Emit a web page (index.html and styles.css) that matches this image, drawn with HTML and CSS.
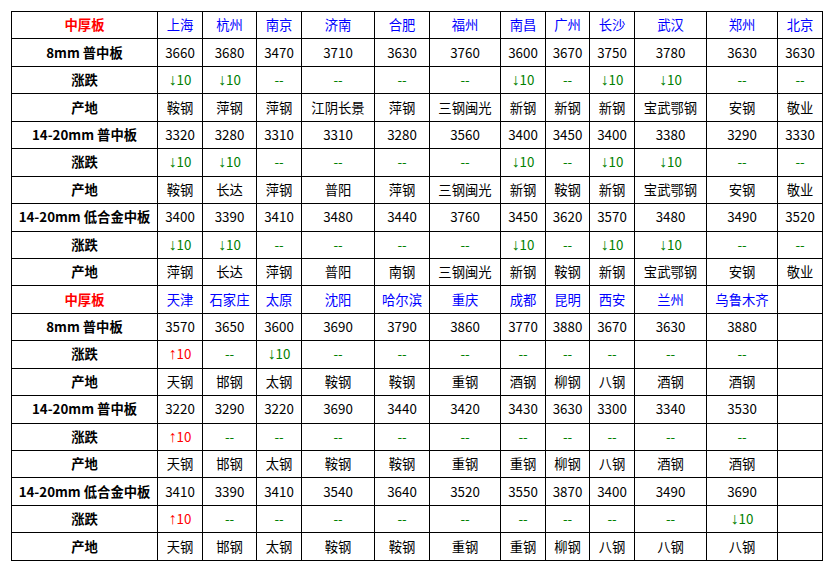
FILE: index.html
```html
<!DOCTYPE html>
<html lang="zh-CN">
<head>
<meta charset="utf-8">
<title>中厚板价格</title>
<link rel="stylesheet" href="styles.css">
</head>
<body>
<div class="wrap">
<table class="price">
<colgroup>
<col class="c-label"><col class="w45"><col class="w54"><col class="w45"><col class="w73"><col class="w55"><col class="w71"><col class="w45"><col class="w44"><col class="w45"><col class="w72"><col class="w71"><col class="w45">
</colgroup>
<tbody>
<tr class="head"><th class="title">中厚板</th><td>上海</td><td>杭州</td><td>南京</td><td>济南</td><td>合肥</td><td>福州</td><td>南昌</td><td>广州</td><td>长沙</td><td>武汉</td><td>郑州</td><td>北京</td></tr>
<tr><th>8mm 普中板</th><td>3660</td><td>3680</td><td>3470</td><td>3710</td><td>3630</td><td>3760</td><td>3600</td><td>3670</td><td>3750</td><td>3780</td><td>3630</td><td>3630</td></tr>
<tr class="chg"><th>涨跌</th><td><span class="ar">↓</span>10</td><td><span class="ar">↓</span>10</td><td>--</td><td>--</td><td>--</td><td>--</td><td><span class="ar">↓</span>10</td><td>--</td><td><span class="ar">↓</span>10</td><td><span class="ar">↓</span>10</td><td>--</td><td>--</td></tr>
<tr><th>产地</th><td>鞍钢</td><td>萍钢</td><td>萍钢</td><td>江阴长景</td><td>萍钢</td><td>三钢闽光</td><td>新钢</td><td>新钢</td><td>新钢</td><td>宝武鄂钢</td><td>安钢</td><td>敬业</td></tr>
<tr><th>14-20mm 普中板</th><td>3320</td><td>3280</td><td>3310</td><td>3310</td><td>3280</td><td>3560</td><td>3400</td><td>3450</td><td>3400</td><td>3380</td><td>3290</td><td>3330</td></tr>
<tr class="chg"><th>涨跌</th><td><span class="ar">↓</span>10</td><td><span class="ar">↓</span>10</td><td>--</td><td>--</td><td>--</td><td>--</td><td><span class="ar">↓</span>10</td><td>--</td><td><span class="ar">↓</span>10</td><td><span class="ar">↓</span>10</td><td>--</td><td>--</td></tr>
<tr><th>产地</th><td>鞍钢</td><td>长达</td><td>萍钢</td><td>普阳</td><td>萍钢</td><td>三钢闽光</td><td>新钢</td><td>鞍钢</td><td>新钢</td><td>宝武鄂钢</td><td>安钢</td><td>敬业</td></tr>
<tr><th>14-20mm 低合金中板</th><td>3400</td><td>3390</td><td>3410</td><td>3480</td><td>3440</td><td>3760</td><td>3450</td><td>3620</td><td>3570</td><td>3480</td><td>3490</td><td>3520</td></tr>
<tr class="chg"><th>涨跌</th><td><span class="ar">↓</span>10</td><td><span class="ar">↓</span>10</td><td>--</td><td>--</td><td>--</td><td>--</td><td><span class="ar">↓</span>10</td><td>--</td><td><span class="ar">↓</span>10</td><td><span class="ar">↓</span>10</td><td>--</td><td>--</td></tr>
<tr><th>产地</th><td>萍钢</td><td>长达</td><td>萍钢</td><td>普阳</td><td>南钢</td><td>三钢闽光</td><td>新钢</td><td>鞍钢</td><td>新钢</td><td>宝武鄂钢</td><td>安钢</td><td>敬业</td></tr>
<tr class="head"><th class="title">中厚板</th><td>天津</td><td>石家庄</td><td>太原</td><td>沈阳</td><td>哈尔滨</td><td>重庆</td><td>成都</td><td>昆明</td><td>西安</td><td>兰州</td><td>乌鲁木齐</td><td></td></tr>
<tr><th>8mm 普中板</th><td>3570</td><td>3650</td><td>3600</td><td>3690</td><td>3790</td><td>3860</td><td>3770</td><td>3880</td><td>3670</td><td>3630</td><td>3880</td><td></td></tr>
<tr class="chg"><th>涨跌</th><td class="up"><span class="ar">↑</span>10</td><td>--</td><td><span class="ar">↓</span>10</td><td>--</td><td>--</td><td>--</td><td>--</td><td>--</td><td>--</td><td>--</td><td>--</td><td></td></tr>
<tr><th>产地</th><td>天钢</td><td>邯钢</td><td>太钢</td><td>鞍钢</td><td>鞍钢</td><td>重钢</td><td>酒钢</td><td>柳钢</td><td>八钢</td><td>酒钢</td><td>酒钢</td><td></td></tr>
<tr><th>14-20mm 普中板</th><td>3220</td><td>3290</td><td>3220</td><td>3690</td><td>3440</td><td>3420</td><td>3430</td><td>3630</td><td>3300</td><td>3340</td><td>3530</td><td></td></tr>
<tr class="chg"><th>涨跌</th><td class="up"><span class="ar">↑</span>10</td><td>--</td><td>--</td><td>--</td><td>--</td><td>--</td><td>--</td><td>--</td><td>--</td><td>--</td><td>--</td><td></td></tr>
<tr><th>产地</th><td>天钢</td><td>邯钢</td><td>太钢</td><td>鞍钢</td><td>鞍钢</td><td>重钢</td><td>重钢</td><td>柳钢</td><td>八钢</td><td>酒钢</td><td>酒钢</td><td></td></tr>
<tr><th>14-20mm 低合金中板</th><td>3410</td><td>3390</td><td>3410</td><td>3540</td><td>3640</td><td>3520</td><td>3550</td><td>3870</td><td>3400</td><td>3490</td><td>3690</td><td></td></tr>
<tr class="chg"><th>涨跌</th><td class="up"><span class="ar">↑</span>10</td><td>--</td><td>--</td><td>--</td><td>--</td><td>--</td><td>--</td><td>--</td><td>--</td><td>--</td><td><span class="ar">↓</span>10</td><td></td></tr>
<tr><th>产地</th><td>天钢</td><td>邯钢</td><td>太钢</td><td>鞍钢</td><td>鞍钢</td><td>重钢</td><td>重钢</td><td>柳钢</td><td>八钢</td><td>八钢</td><td>八钢</td><td></td></tr>
</tbody>
</table>
</div>
</body>
</html>
```
FILE: styles.css
```css
html, body {
  margin: 0;
  padding: 0;
  background: #ffffff;
}
.wrap {
  padding: 11px 0 0 11px;
}
.price {
  border-collapse: collapse;
  table-layout: fixed;
  width: 811px;
  height: 550px;
  font-family: "Noto Sans CJK SC", "Noto Sans", sans-serif;
  font-size: 13.33px;
  color: #000000;
}
.price th,
.price td {
  border: 1px solid #000000;
  padding: 0;
  text-align: center;
  vertical-align: middle;
  white-space: nowrap;
  line-height: 16px;
}
.price th {
  font-weight: bold;
}
.c-label { width: 146px; }
.w44 { width: 44px; }
.w45 { width: 45px; }
.w54 { width: 54px; }
.w55 { width: 55px; }
.w71 { width: 71px; }
.w72 { width: 72px; }
.w73 { width: 73px; }
.price .title {
  color: #ff0000;
}
.head td {
  color: #0000ff;
}
.chg td {
  color: #008000;
}
.chg td.up {
  color: #ff0000;
}
.ar {
  font-family: "Liberation Sans", "DejaVu Sans", sans-serif;
  font-size: 16px;
  line-height: 0;
}
```
